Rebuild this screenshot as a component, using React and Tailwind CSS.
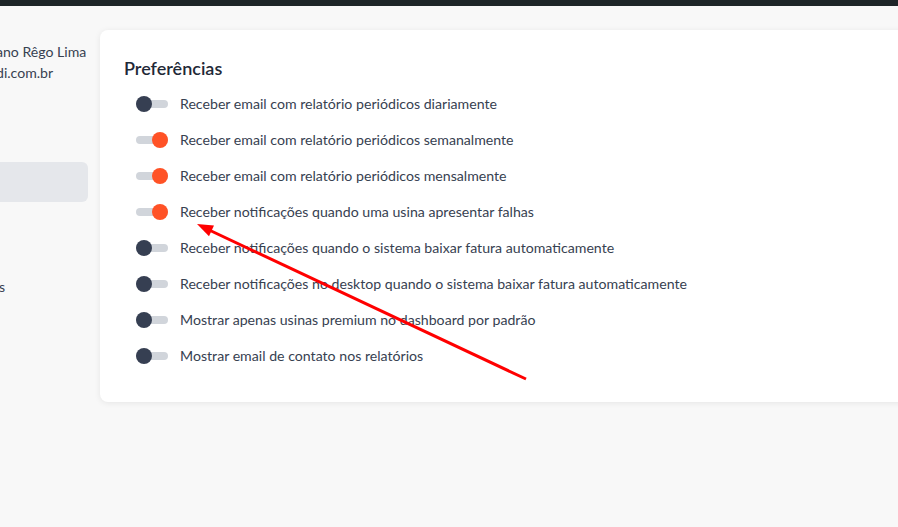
import React, { useState } from "react";

const prefsInicial = [
  { id: "diario", label: "Receber email com relatório periódicos diariamente", on: false },
  { id: "semanal", label: "Receber email com relatório periódicos semanalmente", on: true },
  { id: "mensal", label: "Receber email com relatório periódicos mensalmente", on: true },
  { id: "falhas", label: "Receber notificações quando uma usina apresentar falhas", on: true },
  { id: "fatura", label: "Receber notificações quando o sistema baixar fatura automaticamente", on: false },
  { id: "desktop", label: "Receber notificações no desktop quando o sistema baixar fatura automaticamente", on: false },
  { id: "premium", label: "Mostrar apenas usinas premium no dashboard por padrão", on: false },
  { id: "contato", label: "Mostrar email de contato nos relatórios", on: false },
];

const Toggle = ({ on, onClick }) => (
  <button
    type="button"
    onClick={onClick}
    className="relative flex items-center w-8 h-4 shrink-0 cursor-pointer"
  >
    <span className="w-8 h-2 rounded-full bg-[#d1d5db]" />
    <span
      className={`absolute top-0 w-4 h-4 rounded-full ${
        on ? "left-4 bg-[#ff5226]" : "left-0 bg-[#363f52]"
      }`}
    />
  </button>
);

export default function App() {
  const [prefs, setPrefs] = useState(prefsInicial);

  const toggle = (id) =>
    setPrefs((list) => list.map((p) => (p.id === id ? { ...p, on: !p.on } : p)));

  return (
    <div
      className="relative w-[898px] h-[527px] overflow-hidden bg-[#f8f8f8] text-[#374151]"
      style={{ fontFamily: "Lato, 'Noto Sans', sans-serif" }}
    >
      {/* top bar */}
      <div className="h-[6px] bg-[#1e2528]" />

      <div className="flex">
        {/* sidebar (scrolled off to the left) */}
        <aside className="w-[100px] shrink-0 flex flex-col">
          <div className="pt-[35px] -ml-[4px] text-[14.1px] leading-[21px] whitespace-nowrap">
            <div>ano Rêgo Lima</div>
            <div>di.com.br</div>
          </div>
          <div className="mt-[79px] w-[88px] h-10 rounded-r-md bg-[#e5e7eb]" />
          <div className="mt-[75px] -ml-px text-[14.1px] leading-5">s</div>
        </aside>

        {/* preferences card */}
        <section className="mt-6 w-[820px] shrink-0 bg-white rounded-lg shadow-[0_1px_6px_rgba(0,0,0,0.08)] px-6 pt-6 pb-7">
          <h2 className="text-lg leading-7 font-semibold text-[#1f2937]">Preferências</h2>
          <ul className="mt-1">
            {prefs.map((p) => (
              <li key={p.id} className="flex items-center h-9 pl-3 gap-3">
                <Toggle on={p.on} onClick={() => toggle(p.id)} />
                <span className="text-[14.15px]">{p.label}</span>
              </li>
            ))}
          </ul>
        </section>
      </div>

      {/* annotation arrow */}
      <svg className="absolute inset-0 pointer-events-none" width="898" height="527">
        <line x1="526" y1="379" x2="207" y2="229" stroke="#ff0000" strokeWidth="3" />
        <polygon points="197,224 214,225.4 209,236.2" fill="#ff0000" />
      </svg>
    </div>
  );
}
